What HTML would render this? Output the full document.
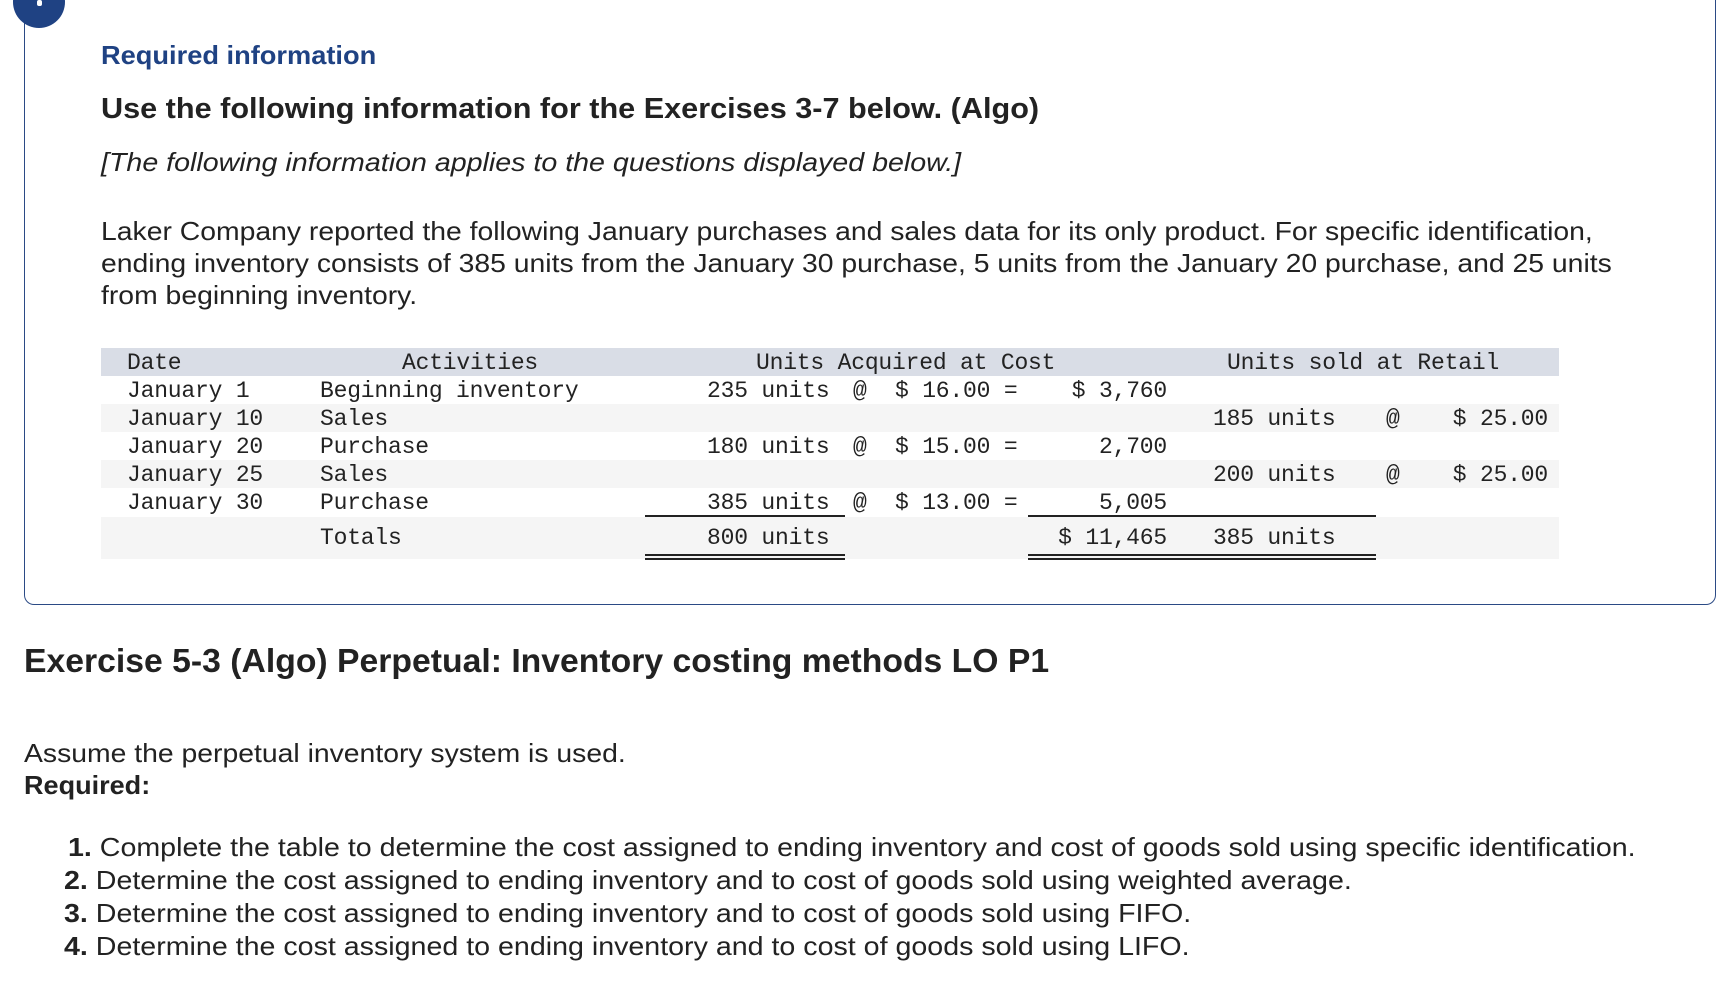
<!DOCTYPE html>
<html><head><meta charset="utf-8"><style>
body{margin:0;width:1718px;height:992px;background:#fff;position:relative;overflow:hidden;font-family:"Liberation Sans",Arial,sans-serif;color:#222;}
.a{position:absolute;white-space:nowrap;transform-origin:0 50%;}
.s{transform:scaleX(1.09);}
.m{position:absolute;font-family:"Liberation Mono",monospace;font-size:23px;letter-spacing:-0.2px;white-space:pre;color:#222;line-height:28px;}
.r{text-align:right;}
.bg{position:absolute;left:101px;width:1458px;}
.ln{position:absolute;height:2px;background:#222;}
</style></head><body>
<div style="position:absolute;left:24px;top:-20px;width:1690px;height:624px;border:1.5px solid #2b4a85;border-top:none;border-radius:0 0 10px 10px;"></div>
<div style="position:absolute;left:13px;top:-24px;width:52px;height:52px;border-radius:50%;background:#1f4283;"></div>
<div style="position:absolute;left:37px;top:0;width:5px;height:6px;background:#fff;border-radius:2px"></div>

<div class="a" style="left:101px;top:40px;font-size:26px;font-weight:bold;color:#1f4283;transform:scaleX(1.047)">Required information</div>
<div class="a" style="left:101px;top:93px;font-size:29px;font-weight:bold;transform:scaleX(1.056)">Use the following information for the Exercises 3-7 below. (Algo)</div>
<div class="a" style="left:101px;top:147px;font-size:26px;font-style:italic;transform:scaleX(1.10)">[The following information applies to the questions displayed below.]</div>
<div class="a s" style="left:101px;top:216px;font-size:26px;">Laker Company reported the following January purchases and sales data for its only product. For specific identification,</div>
<div class="a s" style="left:101px;top:248px;font-size:26px;">ending inventory consists of 385 units from the January 30 purchase, 5 units from the January 20 purchase, and 25 units</div>
<div class="a s" style="left:101px;top:280px;font-size:26px;">from beginning inventory.</div>

<div class="bg" style="top:348px;height:28px;background:#d9dde6"></div>
<div class="bg" style="top:404px;height:28px;background:#f5f5f5"></div>
<div class="bg" style="top:460px;height:28px;background:#f5f5f5"></div>
<div class="bg" style="top:517px;height:42px;background:#f5f5f5"></div>

<div class="m" style="left:127px;top:349px">Date</div>
<div class="m" style="left:402px;top:349px">Activities</div>
<div class="m" style="left:756px;top:349px">Units Acquired at Cost</div>
<div class="m" style="left:1227px;top:349px">Units sold at Retail</div>

<div class="m" style="left:127px;top:377px">January 1</div>
<div class="m" style="left:320px;top:377px">Beginning inventory</div>
<div class="m" style="left:707px;top:377px">235 units</div>
<div class="m" style="left:853px;top:377px">@</div>
<div class="m" style="left:895px;top:377px">$ 16.00 =</div>
<div class="m r" style="left:1000px;width:167px;top:377px">$ 3,760</div>

<div class="m" style="left:127px;top:405px">January 10</div>
<div class="m" style="left:320px;top:405px">Sales</div>
<div class="m" style="left:1213px;top:405px">185 units</div>
<div class="m" style="left:1386px;top:405px">@</div>
<div class="m r" style="left:1400px;width:148px;top:405px">$ 25.00</div>

<div class="m" style="left:127px;top:433px">January 20</div>
<div class="m" style="left:320px;top:433px">Purchase</div>
<div class="m" style="left:707px;top:433px">180 units</div>
<div class="m" style="left:853px;top:433px">@</div>
<div class="m" style="left:895px;top:433px">$ 15.00 =</div>
<div class="m r" style="left:1000px;width:167px;top:433px">2,700</div>

<div class="m" style="left:127px;top:461px">January 25</div>
<div class="m" style="left:320px;top:461px">Sales</div>
<div class="m" style="left:1213px;top:461px">200 units</div>
<div class="m" style="left:1386px;top:461px">@</div>
<div class="m r" style="left:1400px;width:148px;top:461px">$ 25.00</div>

<div class="m" style="left:127px;top:489px">January 30</div>
<div class="m" style="left:320px;top:489px">Purchase</div>
<div class="m" style="left:707px;top:489px">385 units</div>
<div class="m" style="left:853px;top:489px">@</div>
<div class="m" style="left:895px;top:489px">$ 13.00 =</div>
<div class="m r" style="left:1000px;width:167px;top:489px">5,005</div>

<div class="m" style="left:320px;top:524px">Totals</div>
<div class="m" style="left:707px;top:524px">800 units</div>
<div class="m r" style="left:1000px;width:167px;top:524px">$ 11,465</div>
<div class="m" style="left:1213px;top:524px">385 units</div>

<div class="ln" style="left:645px;width:200px;top:515px;height:1.5px"></div>
<div class="ln" style="left:1028px;width:348px;top:515px;height:1.5px"></div>
<div class="ln" style="left:645px;width:200px;top:554px;height:1.5px"></div>
<div class="ln" style="left:645px;width:200px;top:558px;height:1.5px"></div>
<div class="ln" style="left:1028px;width:348px;top:554px;height:1.5px"></div>
<div class="ln" style="left:1028px;width:348px;top:558px;height:1.5px"></div>

<div class="a" style="left:24px;top:642px;font-size:33px;font-weight:bold;transform:scaleX(1.022)">Exercise 5-3 (Algo) Perpetual: Inventory costing methods LO P1</div>
<div class="a s" style="left:24px;top:738px;font-size:26px;">Assume the perpetual inventory system is used.</div>
<div class="a s" style="left:24px;top:770px;font-size:26px;font-weight:bold;transform:scaleX(1.04)">Required:</div>
<div class="a" style="left:68px;top:832px;font-size:26px;transform:scaleX(1.10)"><b>1.</b> Complete the table to determine the cost assigned to ending inventory and cost of goods sold using specific identification.</div>
<div class="a" style="left:64px;top:865px;font-size:26px;transform:scaleX(1.10)"><b>2.</b> Determine the cost assigned to ending inventory and to cost of goods sold using weighted average.</div>
<div class="a" style="left:64px;top:898px;font-size:26px;transform:scaleX(1.10)"><b>3.</b> Determine the cost assigned to ending inventory and to cost of goods sold using FIFO.</div>
<div class="a" style="left:64px;top:931px;font-size:26px;transform:scaleX(1.10)"><b>4.</b> Determine the cost assigned to ending inventory and to cost of goods sold using LIFO.</div>
</body></html>
